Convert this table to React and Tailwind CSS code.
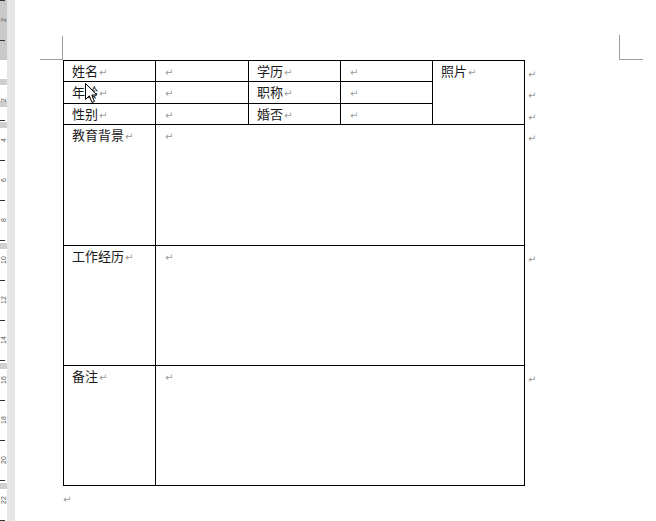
import React from 'react'

const FONT = { fontFamily: '"Noto Sans CJK SC", "Noto Sans", sans-serif' }

// vertical ruler: numbers every 2cm (40px), ticks 10px either side of them
const MARGIN_Y = 60
const NUMBERS = [-2, 2, 4, 6, 8, 10, 12, 14, 16, 18, 20, 22]
const TICKS = []
for (let n = -3; n < 24; n += 2) {
  TICKS.push(MARGIN_Y + n * 20)
}
const ROW_MARKS = [79, 101, 122, 243, 363, 483]

function Mark() {
  return (
    <span
      className="text-[10px] text-[#9a9a9a] ml-[1px] align-baseline"
      style={{ fontFamily: '"DejaVu Sans", sans-serif' }}
    >
      ↵
    </span>
  )
}

function Cell({ label, className = '' }) {
  return (
    <div className={`border-r border-b border-black px-[8px] leading-[20px] text-[13px] text-[#1a1a1a] ${className}`}>
      {label}<Mark />
    </div>
  )
}

function Ruler() {
  return (
    <div className="relative w-[7px] h-full bg-white">
      <div className="h-[60px] bg-[#c9c9c9]" />
      {TICKS.map((y) => (
        <div key={'t' + y} className="absolute left-0 w-[5px] h-px bg-[#333]" style={{ top: y }} />
      ))}
      {ROW_MARKS.map((y) => (
        <div key={'r' + y} className="absolute left-0 w-[7px] h-[6px] bg-[#cfcfcf]" style={{ top: y }} />
      ))}
      {NUMBERS.map((n) => (
        <div
          key={'n' + n}
          className="absolute left-0 w-[7px] h-[12px] flex items-center justify-center text-[7px] leading-[7px] text-[#555] [writing-mode:vertical-rl] rotate-180"
          style={{ top: MARGIN_Y + n * 20 - 6, fontFamily: '"Liberation Sans", sans-serif' }}
        >
          {Math.abs(n)}
        </div>
      ))}
    </div>
  )
}

function Cursor() {
  return (
    <svg className="absolute left-[85px] top-[83px]" width="13" height="21" viewBox="0 0 13 21">
      <path d="M0.5 0.5 L0.5 16.5 L4.3 12.8 L7 19.5 L9.4 18.5 L6.8 12 L11.8 12 Z" fill="#fff" stroke="#000" strokeWidth="1" strokeLinejoin="round" />
    </svg>
  )
}

export default function App() {
  return (
    <div className="relative w-[656px] h-[521px] bg-white flex overflow-hidden" style={FONT}>
      <Ruler />
      <div className="w-[8px] h-full bg-[#e6e6e6]" />

      <div className="flex-1 flex flex-col">
        {/* crop marks */}
        <div className="flex h-[24px] mt-[36px]">
          <div className="w-[25px]" />
          <div className="w-[23px] border-r border-b border-[#9c9c9c]" />
          <div className="w-[556px]" />
          <div className="w-[24px] border-l border-b border-[#9c9c9c] -mt-px" />
        </div>

        <div className="flex ml-[48px]">
          <div className="grid grid-cols-[92px_93px_92px_92px_92px] grid-rows-[21px_22px_21px_121px_120px_120px] w-[462px] border-l border-t border-black">
            <Cell label="姓名" />
            <Cell />
            <Cell label="学历" />
            <Cell />
            <Cell label="照片" className="row-span-3" />

            <Cell label="年龄" />
            <Cell />
            <Cell label="职称" />
            <Cell />

            <Cell label="性别" />
            <Cell />
            <Cell label="婚否" />
            <Cell />

            <Cell label="教育背景" />
            <Cell className="col-span-4" />

            <Cell label="工作经历" />
            <Cell className="col-span-4" />

            <Cell label="备注" />
            <Cell className="col-span-4" />
          </div>

          <div className="grid grid-rows-[21px_22px_21px_121px_120px_120px] pt-px ml-[2px] leading-[20px]">
            <div><Mark /></div>
            <div><Mark /></div>
            <div><Mark /></div>
            <div><Mark /></div>
            <div><Mark /></div>
            <div><Mark /></div>
          </div>
        </div>

        <div className="ml-[47px] leading-[20px]"><Mark /></div>
      </div>

      <Cursor />
    </div>
  )
}
